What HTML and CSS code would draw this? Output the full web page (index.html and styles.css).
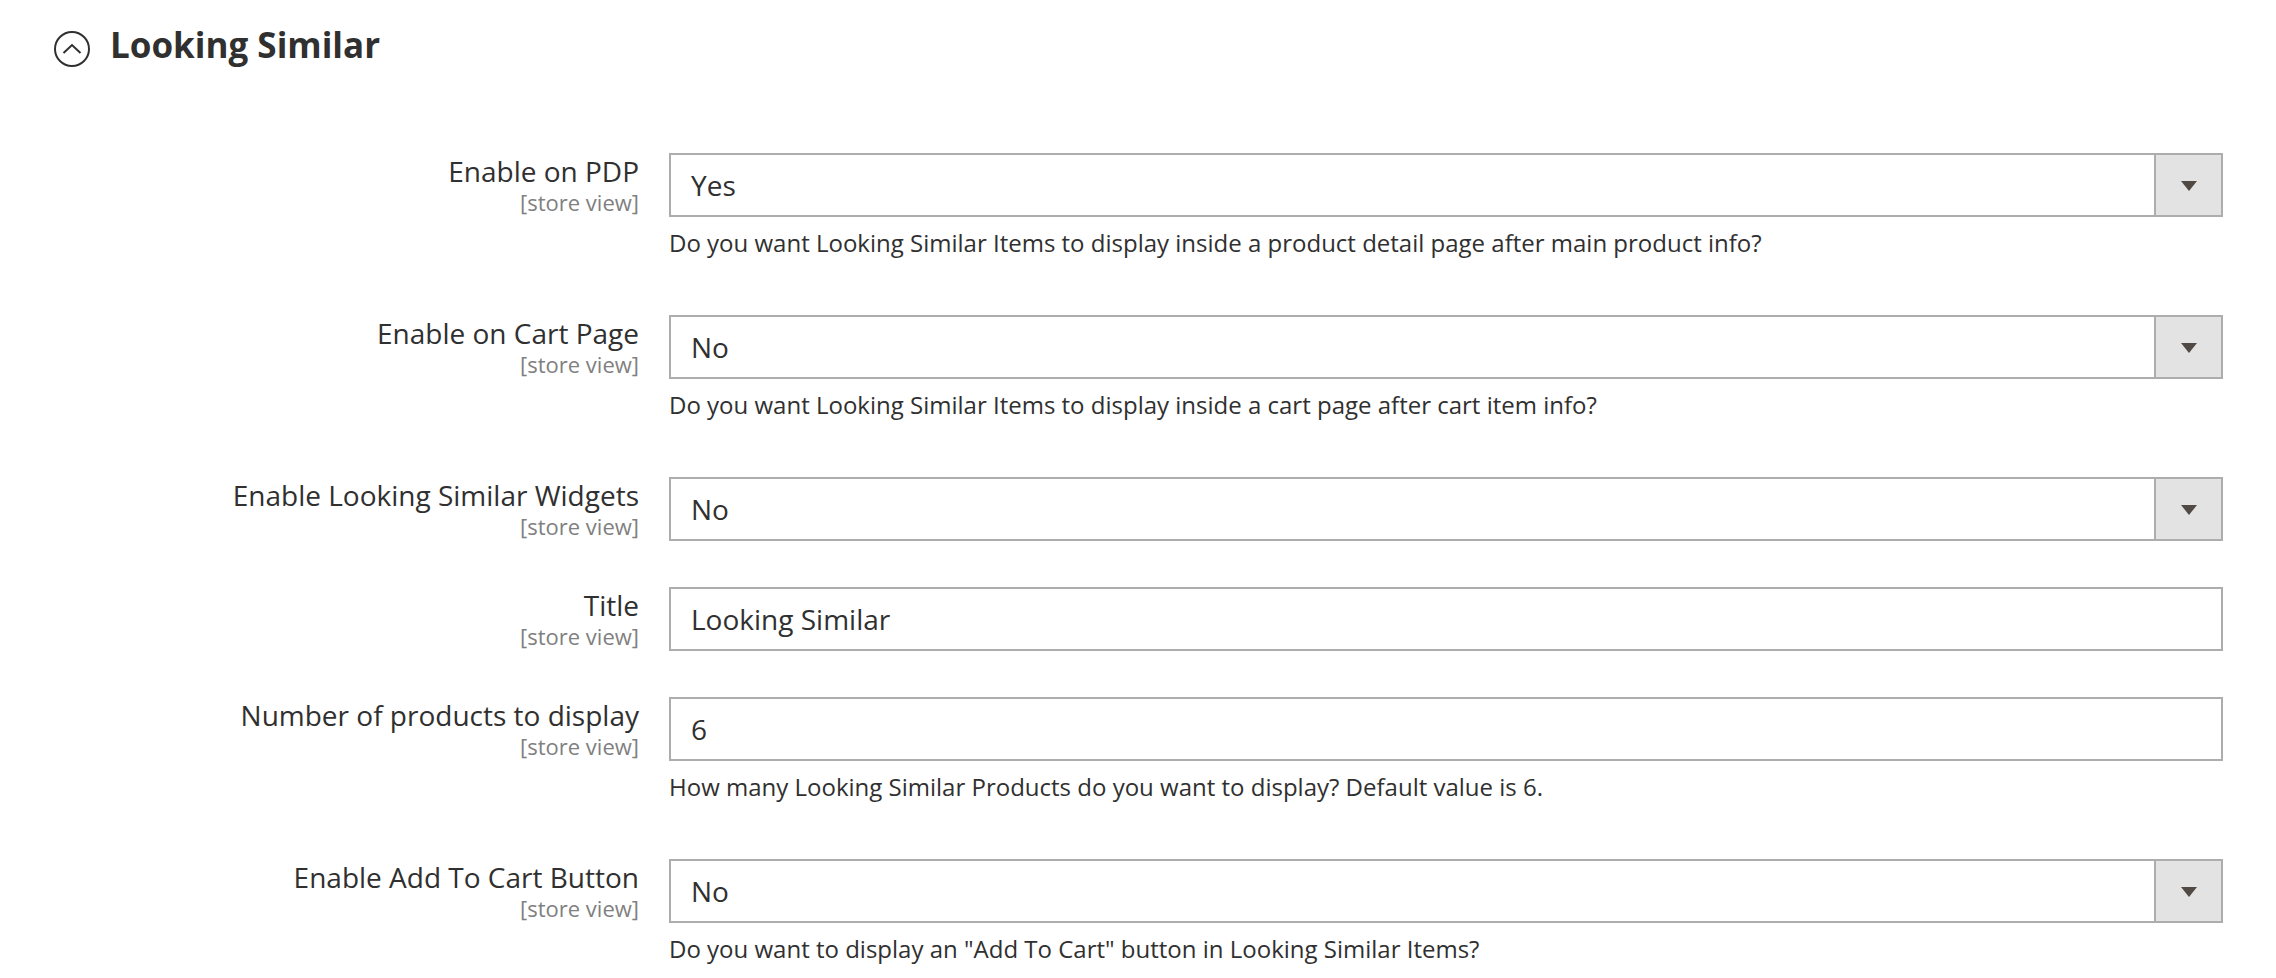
FILE: index.html
```html
<!DOCTYPE html>
<html lang="en">
<head>
<meta charset="utf-8">
<title>Looking Similar</title>
<link rel="stylesheet" href="styles.css">
</head>
<body>
<section class="section">
  <header class="section-head">
    <svg class="toggle-icon" width="36" height="36" viewBox="0 0 36 36" aria-hidden="true">
      <circle cx="18" cy="18" r="17" fill="none" stroke="#303030" stroke-width="2"/>
      <polyline points="9.5,22 18,14 26.5,22" fill="none" stroke="#303030" stroke-width="2" stroke-linejoin="miter"/>
    </svg>
    <h2 class="section-title">Looking Similar</h2>
  </header>

  <div class="form">
    <div class="field">
      <label class="field-label">Enable on PDP<span class="scope">[store view]</span></label>
      <div class="control">
        <div class="select-wrap">
          <select class="select"><option>Yes</option><option>No</option></select>
          <span class="select-btn"><svg width="16" height="10" viewBox="0 0 16 10"><polygon points="0,0 16,0 8,10" fill="#514943"/></svg></span>
        </div>
        <p class="note">Do you want Looking Similar Items to display inside a product detail page after main product info?</p>
      </div>
    </div>

    <div class="field">
      <label class="field-label">Enable on Cart Page<span class="scope">[store view]</span></label>
      <div class="control">
        <div class="select-wrap">
          <select class="select"><option>No</option><option>Yes</option></select>
          <span class="select-btn"><svg width="16" height="10" viewBox="0 0 16 10"><polygon points="0,0 16,0 8,10" fill="#514943"/></svg></span>
        </div>
        <p class="note">Do you want Looking Similar Items to display inside a cart page after cart item info?</p>
      </div>
    </div>

    <div class="field">
      <label class="field-label">Enable Looking Similar Widgets<span class="scope">[store view]</span></label>
      <div class="control">
        <div class="select-wrap">
          <select class="select"><option>No</option><option>Yes</option></select>
          <span class="select-btn"><svg width="16" height="10" viewBox="0 0 16 10"><polygon points="0,0 16,0 8,10" fill="#514943"/></svg></span>
        </div>
      </div>
    </div>

    <div class="field">
      <label class="field-label">Title<span class="scope">[store view]</span></label>
      <div class="control">
        <input class="input" type="text" value="Looking Similar">
      </div>
    </div>

    <div class="field">
      <label class="field-label">Number of products to display<span class="scope">[store view]</span></label>
      <div class="control">
        <input class="input" type="text" value="6">
        <p class="note">How many Looking Similar Products do you want to display? Default value is 6.</p>
      </div>
    </div>

    <div class="field">
      <label class="field-label">Enable Add To Cart Button<span class="scope">[store view]</span></label>
      <div class="control">
        <div class="select-wrap">
          <select class="select"><option>No</option><option>Yes</option></select>
          <span class="select-btn"><svg width="16" height="10" viewBox="0 0 16 10"><polygon points="0,0 16,0 8,10" fill="#514943"/></svg></span>
        </div>
        <p class="note">Do you want to display an "Add To Cart" button in Looking Similar Items?</p>
      </div>
    </div>
  </div>
</section>
</body>
</html>
```

FILE: styles.css
```css
html, body {
  margin: 0;
  padding: 0;
  background: #ffffff;
}

body {
  font-family: "Open Sans", "Liberation Sans", sans-serif;
  color: #303030;
  overflow: hidden;
}

.section {
  width: 2276px;
}

.section-head {
  display: flex;
  align-items: flex-start;
  padding-top: 26px;
  padding-left: 54px;
}

.toggle-icon {
  display: block;
  margin-top: 5px;
  flex: none;
}

.section-title {
  margin: 0 0 0 20px;
  font-size: 35px;
  line-height: 38px;
  font-weight: 700;
  color: #303030;
}

.form {
  margin-top: 86px;
  display: flex;
  flex-direction: column;
  gap: 46px;
}

.field {
  display: grid;
  grid-template-columns: 639px 1554px;
  column-gap: 30px;
  align-items: start;
}

.field-label {
  text-align: right;
  padding-top: 1px;
  font-size: 28px;
  line-height: 34px;
  color: #303030;
}

.scope {
  display: block;
  font-size: 22px;
  line-height: 28px;
  color: #808080;
}

.control {
  display: flex;
  flex-direction: column;
}

.select-wrap {
  position: relative;
  height: 64px;
}

.select,
.input {
  box-sizing: border-box;
  width: 100%;
  height: 64px;
  margin: 0;
  border: 2px solid #adadad;
  border-radius: 0;
  background: #ffffff;
  padding: 0 20px;
  font-family: "Open Sans", "Liberation Sans", sans-serif;
  font-size: 28px;
  line-height: 38px;
  color: #303030;
  outline: none;
}

.select {
  appearance: none;
  -webkit-appearance: none;
  padding-right: 90px;
}

.select-btn {
  position: absolute;
  top: 0;
  right: 0;
  box-sizing: border-box;
  width: 69px;
  height: 64px;
  background: #e3e3e3;
  border: 2px solid #adadad;
  display: flex;
  align-items: center;
  justify-content: center;
  pointer-events: none;
}

.select-btn svg {
  display: block;
  margin-top: 2px;
}

.note {
  margin: 9px 0 0;
  padding-bottom: 9px;
  font-size: 24px;
  line-height: 34px;
  color: #303030;
}
```
